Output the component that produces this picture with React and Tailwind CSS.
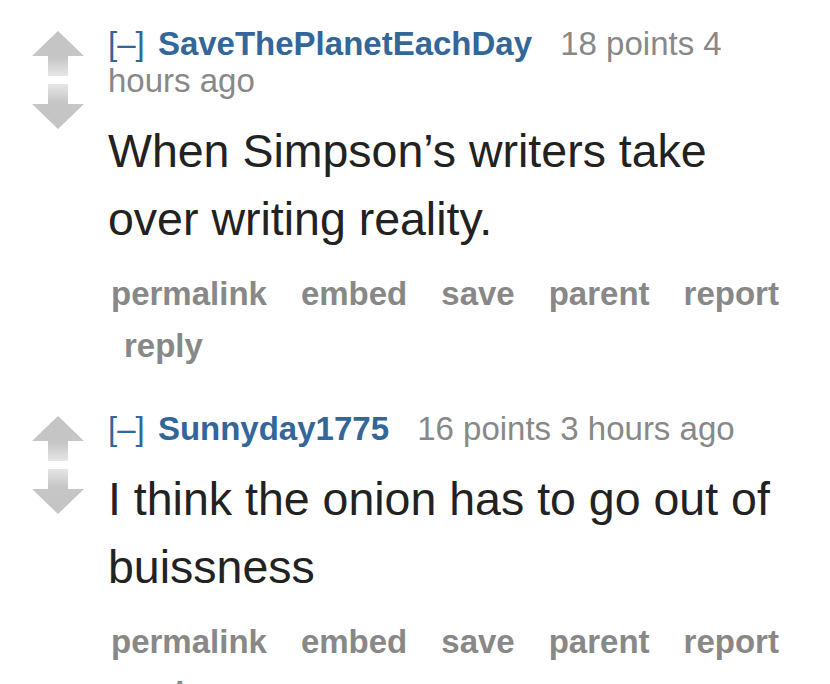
import React from 'react';

const comments = [
  {
    id: 'c1',
    author: 'SaveThePlanetEachDay',
    points: 18,
    age: '4 hours ago',
    body: 'When Simpson’s writers take over writing reality.',
  },
  {
    id: 'c2',
    author: 'Sunnyday1775',
    points: 16,
    age: '3 hours ago',
    body: 'I think the onion has to go out of buissness',
  },
];

const buttons = ['permalink', 'embed', 'save', 'parent', 'report', 'reply'];

const UpArrow = ({ id }) => (
  <svg width="52" height="45" viewBox="0 0 52 45">
    <defs>
      <linearGradient id={id} x1="0" y1="0" x2="0" y2="1">
        <stop offset="0" stopColor="#c4c4c4" />
        <stop offset="0.6" stopColor="#c6c6c6" />
        <stop offset="1" stopColor="#e6e6e6" />
      </linearGradient>
    </defs>
    <polygon points="26,0 52,25 36,25 36,45 16,45 16,25 0,25" fill={`url(#${id})`} />
  </svg>
);

const DownArrow = ({ id }) => (
  <svg width="52" height="45" viewBox="0 0 52 45">
    <defs>
      <linearGradient id={id} x1="0" y1="1" x2="0" y2="0">
        <stop offset="0" stopColor="#c4c4c4" />
        <stop offset="0.6" stopColor="#c6c6c6" />
        <stop offset="1" stopColor="#e6e6e6" />
      </linearGradient>
    </defs>
    <polygon points="16,0 36,0 36,20 52,20 26,45 0,20 16,20" fill={`url(#${id})`} />
  </svg>
);

const Comment = ({ comment }) => (
  <div className="flex">
    <div className="flex flex-col gap-[8px] w-[52px] shrink-0 mt-[6px]">
      <UpArrow id={`${comment.id}-up`} />
      <DownArrow id={`${comment.id}-down`} />
    </div>
    <div className="flex-1 ml-[24px] pr-[25px]">
      <p className="text-[33px] leading-[37px] text-[#888888] font-['Liberation_Sans',Arial,sans-serif]">
        <span className="text-[#336699] mr-[4px]">[–]</span>{' '}
        <span className="text-[#336699] font-bold mr-[19px]">{comment.author}</span>{' '}
        {comment.points} points {comment.age}
      </p>
      <p className="mt-[18px] text-[46.5px] leading-[68px] text-[#222222] font-['Liberation_Sans',Arial,sans-serif]">
        {comment.body}
      </p>
      <ul className="mt-[15px] flex flex-wrap text-[33px] leading-[52px] font-bold text-[#888888] font-['Liberation_Sans',Arial,sans-serif]">
        {buttons.map((b, i) => (
          <li key={b} className={i === 0 ? 'pl-[3px] pr-[18px]' : 'pl-[16px] pr-[18px]'}>
            {b}
          </li>
        ))}
      </ul>
    </div>
  </div>
);

export default function App() {
  return (
    <div className="w-[830px] h-[684px] overflow-hidden bg-white pl-[32px] pt-[25px]">
      <div className="flex flex-col gap-[38px]">
        {comments.map((c) => (
          <Comment key={c.id} comment={c} />
        ))}
      </div>
    </div>
  );
}
